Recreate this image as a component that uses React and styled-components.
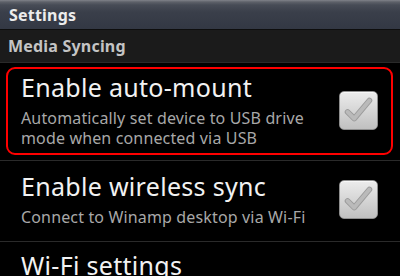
import styled, { createGlobalStyle } from "styled-components";

const GlobalStyle = createGlobalStyle`
  html, body {
    margin: 0;
    padding: 0;
    background: #000;
  }
  body {
    font-family: "Noto Sans", "Open Sans", sans-serif;
  }
`;

const Screen = styled.div`
  width: 400px;
  height: 276px;
  overflow: hidden;
  background: #000;
  display: flex;
  flex-direction: column;
`;

const TitleBar = styled.div`
  flex: none;
  height: 29px;
  display: flex;
  align-items: center;
  padding-left: 9px;
  box-sizing: border-box;
  background: linear-gradient(
    to bottom,
    #80838a 0px,
    #5d6169 2px,
    #474c56 5px,
    #3a3f4a 12px,
    #333844 29px
  );
  color: #ececec;
  font-weight: 700;
  font-size: 16px;
  letter-spacing: 0.2px;
`;

const CategoryHeader = styled.div`
  flex: none;
  height: 34px;
  display: flex;
  align-items: center;
  padding-left: 8px;
  box-sizing: border-box;
  background: #1b1b1b;
  border-top: 1px solid #0e0e0e;
  border-bottom: 1px solid #2a2a2a;
  color: #c4c4c4;
  font-weight: 700;
  font-size: 16px;
  letter-spacing: 0.2px;
`;

const PrefRow = styled.div`
  flex: none;
  border-bottom: 1px solid #2a2a2a;
`;

const PrefFrame = styled.div`
  display: flex;
  align-items: center;
  margin: 4px 7px 5px 6px;
  padding: ${(p) => (p.$tall ? "3px 13px 5px" : "4px 13px 7px")};
  border: 2px solid ${(p) => (p.$outlined ? "#ff0000" : "transparent")};
  border-radius: 9px;
`;

const PrefText = styled.div`
  flex: 1;
  min-width: 0;
`;

const PrefTitle = styled.div`
  color: #f2f2f2;
  font-size: 25px;
  line-height: 31px;
  letter-spacing: 0.3px;
`;

const PrefSummary = styled.div`
  margin-top: 5px;
  color: #a8a8a8;
  font-size: 16px;
  line-height: 20px;
  letter-spacing: 0.15px;
`;

const CheckBox = styled.div`
  flex: none;
  width: 39px;
  height: 39px;
  box-sizing: border-box;
  border-radius: 5px;
  border: 1px solid #8e8e8e;
  background: linear-gradient(to bottom, #ececec, #d6d6d6 50%, #c0c0c0);
  box-shadow: inset 0 1px 0 #f8f8f8;
  display: flex;
  align-items: center;
  justify-content: center;
`;

const NextTitle = styled(PrefTitle)`
  padding: 8px 0 0 21px;
`;

function Check() {
  return (
    <CheckBox>
      <svg width="39" height="39" viewBox="0 0 39 39">
        <path
          d="M8 21 L15 28 L31 9"
          fill="none"
          stroke="#9c9c9c"
          strokeWidth="6"
          strokeLinecap="round"
          strokeLinejoin="round"
        />
        <path
          d="M8 21 L15 28 L31 9"
          fill="none"
          stroke="#bababa"
          strokeWidth="4"
          strokeLinecap="round"
          strokeLinejoin="round"
        />
      </svg>
    </CheckBox>
  );
}

const prefs = [
  {
    title: "Enable auto-mount",
    lines: ["Automatically set device to USB drive", "mode when connected via USB"],
    outlined: true,
    tall: true,
  },
  {
    title: "Enable wireless sync",
    lines: ["Connect to Winamp desktop via Wi-Fi"],
  },
];

export default function App() {
  return (
    <Screen>
      <GlobalStyle />
      <TitleBar>Settings</TitleBar>
      <CategoryHeader>Media Syncing</CategoryHeader>
      {prefs.map((p) => (
        <PrefRow key={p.title}>
          <PrefFrame $outlined={p.outlined} $tall={p.tall}>
            <PrefText>
              <PrefTitle>{p.title}</PrefTitle>
              <PrefSummary>
                {p.lines.map((line) => (
                  <div key={line}>{line}</div>
                ))}
              </PrefSummary>
            </PrefText>
            <Check />
          </PrefFrame>
        </PrefRow>
      ))}
      <NextTitle>Wi-Fi settings</NextTitle>
    </Screen>
  );
}
